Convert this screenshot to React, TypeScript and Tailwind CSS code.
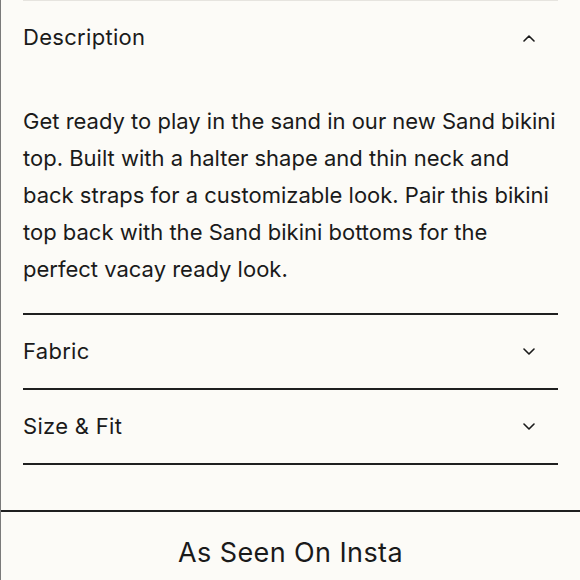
import React from 'react';

const Chevron = ({ up }: { up?: boolean }) => (
  <svg width="14" height="8" viewBox="0 0 14 8" fill="none" xmlns="http://www.w3.org/2000/svg">
    <path d={up ? 'M2 7L7 2L12 7' : 'M2 1L7 6L12 1'} stroke="#1a1a1a" strokeWidth="1.6" strokeLinecap="round" strokeLinejoin="round" />
  </svg>
);

const Row = ({ title }: { title: string }) => (
  <div className="h-[75px] flex items-center justify-between border-b-2 border-[#1f1f1f] pr-[22px]">
    <span className="text-[22px] tracking-[0.3px] text-[#1a1a1a]">{title}</span>
    <Chevron />
  </div>
);

export default function App() {
  return (
    <div
      className="w-[580px] h-[580px] bg-[#fcfbf7] border-l border-[#7a7a7a] flex flex-col overflow-hidden"
      style={{ fontFamily: 'Inter, "Noto Sans", sans-serif' }}
    >
      <div className="mx-[22px] border-t border-[#e6e4df] flex flex-col">
        {/* Description - open */}
        <div className="h-[73px] flex items-center justify-between pr-[22px]">
          <span className="text-[22px] tracking-[0.3px] text-[#1a1a1a]">Description</span>
          <Chevron up />
        </div>
        <div className="pt-[29px] pb-[25px] border-b-2 border-[#1f1f1f]">
          <p className="text-[22px] leading-[37px] text-[#1a1a1a] tracking-[0px]">
            Get ready to play in the sand in our new Sand bikini top. Built with a halter shape and thin neck and back straps for a customizable look. Pair this bikini top back with the Sand bikini bottoms for the perfect vacay ready look.
          </p>
        </div>
        <Row title="Fabric" />
        <Row title="Size &amp; Fit" />
      </div>

      <div className="mt-[45px] border-t-2 border-[#1f1f1f] flex justify-center pt-[21px]">
        <h2 className="text-[27px] tracking-[0.4px] text-[#1a1a1a]">As Seen On Insta</h2>
      </div>
    </div>
  );
}
